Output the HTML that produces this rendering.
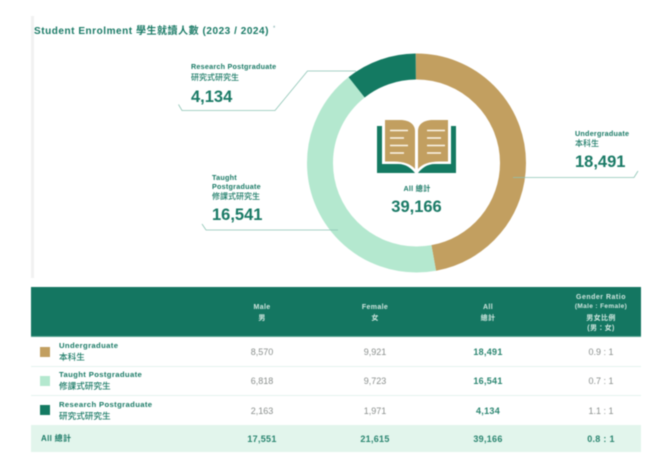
<!DOCTYPE html>
<html><head><meta charset="utf-8">
<style>
html,body{margin:0;padding:0;background:#fff}
#p{position:relative;width:657px;height:467px;overflow:hidden;background:#fff;font-family:"Liberation Sans","Noto Sans CJK TC",sans-serif;color:#1a7a66;filter:blur(.45px)}
.t{position:absolute;white-space:nowrap;line-height:1}
.b{font-weight:700}
.lab{font-size:7.2px;font-weight:700;letter-spacing:.24px}
.zh{font-size:8px;font-weight:500;letter-spacing:0}
.num{font-size:16.5px;font-weight:700;letter-spacing:0;color:#1a7a66}
.c{transform:translateX(-50%);text-align:center}
.w{color:#cfe6df;font-size:7px;font-weight:700;letter-spacing:.35px}
.g{color:#8a8f8d;font-size:9px}
.s{color:#2a8570;font-size:9px;font-weight:700;letter-spacing:.3px}
.sq{position:absolute;left:40px;width:10px;height:10px}
.tl{font-size:7.7px;font-weight:700;letter-spacing:.36px}
.tz{font-size:8.6px;font-weight:500}
</style></head><body>
<div id="p">
<div style="position:absolute;left:31px;top:16px;width:3px;height:262px;background:#f1f1f1"></div>
<div class="t b" style="left:34px;top:26.5px;font-size:10px;letter-spacing:.54px">Student Enrolment 學生就讀人數 (2023 / 2024)</div>
<div class="t" style="left:273px;top:26px;font-size:6px;color:#7aa">*</div>

<svg width="657" height="467" style="position:absolute;left:0;top:0">
<g fill="none" stroke-width="26">
<circle cx="416.5" cy="163" r="96.5" stroke="#c29f60" pathLength="100" stroke-dasharray="47.2 52.8" transform="rotate(-90 416.5 163)"/>
<circle cx="416.5" cy="163" r="96.5" stroke="#b4e8cf" pathLength="100" stroke-dasharray="42.25 57.75" stroke-dashoffset="-47.2" transform="rotate(-90 416.5 163)"/>
<circle cx="416.5" cy="163" r="96.5" stroke="#147a62" pathLength="100" stroke-dasharray="10.55 89.45" stroke-dashoffset="-89.45" transform="rotate(-90 416.5 163)"/>
</g>
<g fill="none" stroke="#8cc4b4" stroke-width=".8">
<path d="M178.500 104.500L182 110.500H275L307.500 71H356"/>
<path d="M513 177.500H634L638 171"/>
<path d="M202 224L206 230H338"/>
</g>
<path d="M377 126H382V164H398C406 164 411 168 415 173H377Z" fill="#147a62"/>
<path d="M456 126H451V164H435C427 164 422 168 418 173H456Z" fill="#147a62"/>
<path d="M385 120H400C409 120 415 124 415 131V169C411 164 403 161.500 394 161.500H385Z" fill="#c29f60"/>
<path d="M448 120H433C424 120 418 124 418 131V169C422 164 430 161.500 439 161.500H448Z" fill="#c29f60"/>
<g stroke="#fbf6ea" stroke-width="1.500" fill="none">
<path d="M390 130.500H408M390 138H404M390 145.500H408M390 153H404"/>
<path d="M427 130.500H445M427 138H441M427 145.500H445M427 153H441"/>
</g>
</svg>

<div class="t lab" style="left:191px;top:63px">Research Postgraduate</div>
<div class="t zh" style="left:191px;top:74px">研究式研究生</div>
<div class="t num" style="left:191px;top:89px">4,134</div>

<div class="t lab" style="left:575px;top:130px">Undergraduate</div>
<div class="t zh" style="left:575px;top:140px">本科生</div>
<div class="t num" style="left:575px;top:154px">18,491</div>

<div class="t lab" style="left:212px;top:174px">Taught</div>
<div class="t lab" style="left:212px;top:183px">Postgraduate</div>
<div class="t zh" style="left:212px;top:193px">修課式研究生</div>
<div class="t num" style="left:212px;top:207px">16,541</div>

<div class="t lab c" style="left:417px;top:185px">All 總計</div>
<div class="t num c" style="left:416.500px;top:199px">39,166</div>

<div style="position:absolute;left:31px;top:287px;width:610px;height:49px;background:#147661;border-bottom:1px solid #5aa593"></div>
<div style="position:absolute;left:31px;top:366px;width:610px;height:1px;background:#e3f3ee"></div>
<div style="position:absolute;left:31px;top:395px;width:610px;height:1px;background:#e3f3ee"></div>
<div style="position:absolute;left:31px;top:425px;width:610px;height:27px;background:#e2f5ec"></div>

<div class="t w c" style="left:262px;top:303.500px">Male</div>
<div class="t w c" style="left:262px;top:314.500px">男</div>
<div class="t w c" style="left:375px;top:303.500px">Female</div>
<div class="t w c" style="left:375px;top:314.500px">女</div>
<div class="t w c" style="left:488px;top:303.500px">All</div>
<div class="t w c" style="left:488px;top:314.500px">總計</div>
<div class="t w c" style="left:601px;top:294px;letter-spacing:.5px">Gender Ratio</div>
<div class="t w c" style="left:601px;top:304px;font-size:6.500px">(Male : Female)</div>
<div class="t w c" style="left:601px;top:315px">男女比例</div>
<div class="t w c" style="left:601px;top:325px">(男：女)</div>

<div class="sq" style="top:347px;background:#c29f60"></div>
<div class="sq" style="top:376px;background:#b4e8cf"></div>
<div class="sq" style="top:405px;background:#147a62"></div>

<div class="t tl" style="left:59px;top:342px">Undergraduate</div>
<div class="t tz" style="left:59px;top:353px">本科生</div>
<div class="t tl" style="left:59px;top:371px">Taught Postgraduate</div>
<div class="t tz" style="left:59px;top:382px">修課式研究生</div>
<div class="t tl" style="left:59px;top:401px">Research Postgraduate</div>
<div class="t tz" style="left:59px;top:412px">研究式研究生</div>

<div class="t g c" style="left:262px;top:348px">8,570</div>
<div class="t g c" style="left:375px;top:348px">9,921</div>
<div class="t s c" style="left:488px;top:348px">18,491</div>
<div class="t g c" style="left:601px;top:348px">0.9 : 1</div>

<div class="t g c" style="left:262px;top:377px">6,818</div>
<div class="t g c" style="left:375px;top:377px">9,723</div>
<div class="t s c" style="left:488px;top:377px">16,541</div>
<div class="t g c" style="left:601px;top:377px">0.7 : 1</div>

<div class="t g c" style="left:262px;top:406.500px">2,163</div>
<div class="t g c" style="left:375px;top:406.500px">1,971</div>
<div class="t s c" style="left:488px;top:406.500px">4,134</div>
<div class="t g c" style="left:601px;top:406.500px">1.1 : 1</div>

<div class="t b" style="left:41px;top:435px;font-size:8px;letter-spacing:.3px">All 總計</div>
<div class="t s c" style="left:262px;top:435px">17,551</div>
<div class="t s c" style="left:375px;top:435px">21,615</div>
<div class="t s c" style="left:488px;top:435px">39,166</div>
<div class="t s c" style="left:601px;top:435px">0.8 : 1</div>
</div>
</body></html>
